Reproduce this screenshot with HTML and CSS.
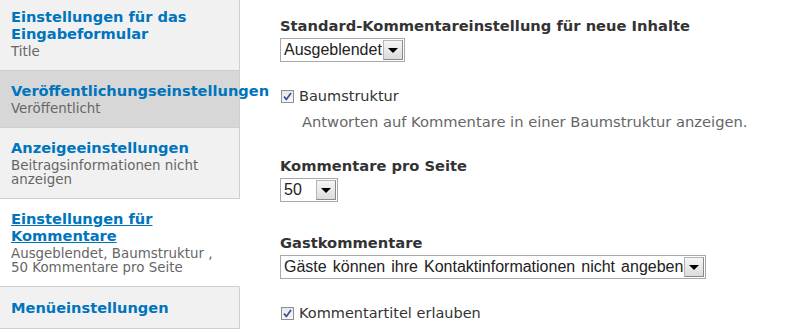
FILE: index.html
```html
<!DOCTYPE html>
<html lang="de">
<head>
    <meta charset="UTF-8">
    <title>Inhaltstyp bearbeiten</title>
    <link rel="stylesheet" href="styles.css">
</head>
<body>
    <div class="vertical-tabs">
        <ul class="tab-list">
            <li class="tab first">
                <a href="#" class="tab-title">Einstellungen für das Eingabeformular</a>
                <span class="summary">Title</span>
            </li>
            <li class="tab hover">
                <a href="#" class="tab-title">Veröffentlichungseinstellungen</a>
                <span class="summary">Veröffentlicht</span>
            </li>
            <li class="tab">
                <a href="#" class="tab-title">Anzeigeeinstellungen</a>
                <span class="summary">Beitragsinformationen nicht anzeigen</span>
            </li>
            <li class="tab selected">
                <a href="#" class="tab-title">Einstellungen für Kommentare</a>
                <span class="summary">Ausgeblendet, Baumstruktur ,<br>50 Kommentare pro Seite</span>
            </li>
            <li class="tab last">
                <a href="#" class="tab-title">Menüeinstellungen</a>
            </li>
        </ul>

        <div class="pane">
            <div class="form-item">
                <label class="field-label">Standard-Kommentareinstellung für neue Inhalte</label>
                <div class="select">
                    <span class="select-value">Ausgeblendet</span>
                    <span class="select-arrow"></span>
                </div>
            </div>

            <div class="form-item check-item tree">
                <label class="check">
                    <span class="checkbox">
                        <svg width="9" height="9" viewBox="0 0 9 9"><path d="M1 4.6 L3.4 7.4 L8 1" fill="none" stroke="#3b4f8f" stroke-width="1.7"/></svg>
                    </span>
                    Baumstruktur
                </label>
                <div class="description">Antworten auf Kommentare in einer Baumstruktur anzeigen.</div>
            </div>

            <div class="form-item">
                <label class="field-label">Kommentare pro Seite</label>
                <div class="select small">
                    <span class="select-value">50</span>
                    <span class="select-arrow"></span>
                </div>
            </div>

            <div class="form-item guest">
                <label class="field-label">Gastkommentare</label>
                <div class="select">
                    <span class="select-value wide">Gäste können ihre Kontaktinformationen nicht angeben</span>
                    <span class="select-arrow"></span>
                </div>
            </div>

            <div class="form-item check-item">
                <label class="check">
                    <span class="checkbox">
                        <svg width="9" height="9" viewBox="0 0 9 9"><path d="M1 4.6 L3.4 7.4 L8 1" fill="none" stroke="#3b4f8f" stroke-width="1.7"/></svg>
                    </span>
                    Kommentartitel erlauben
                </label>
            </div>
        </div>
    </div>
</body>
</html>
```

FILE: styles.css
```css
body {
    margin: 0;
    padding: 0;
    background-color: #fff;
    color: #333;
    font-family: "DejaVu Sans", Verdana, sans-serif;
    overflow: hidden;
}

.vertical-tabs {
    display: flex;
    align-items: flex-start;
}

.tab-list {
    list-style: none;
    margin: 0;
    padding: 0;
    width: 240px;
    flex-shrink: 0;
}

.tab {
    background-color: #f1f1f1;
    border-right: 1px solid #cfcfcf;
    border-bottom: 1px solid #cfcfcf;
    padding: 11px;
    white-space: nowrap;
}

.tab.first {
    padding-top: 8px;
}

.tab.last {
    padding: 12px 11px;
}

.tab.hover {
    background-color: #d7d7d7;
}

.tab.selected {
    background-color: #fff;
    border-right-color: #fff;
}

.tab-title {
    display: block;
    color: #0074bd;
    font-weight: bold;
    font-size: 14.6px;
    line-height: 17px;
    text-decoration: none;
    white-space: normal;
    width: 218px;
}

.tab.hover .tab-title {
    white-space: nowrap;
    width: auto;
}

.tab.selected .tab-title {
    text-decoration: underline;
    width: 180px;
}

.summary {
    display: block;
    margin-top: 3px;
    color: #666;
    font-size: 13.4px;
    line-height: 14px;
    white-space: normal;
}

.pane {
    padding: 17px 0 0 40px;
}

.form-item {
    margin-bottom: 25px;
}

.form-item.tree {
    margin-bottom: 27px;
}

.field-label {
    display: block;
    font-weight: bold;
    font-size: 14.7px;
    line-height: 18px;
    margin-bottom: 3px;
    color: #333;
}

.select {
    display: inline-flex;
    align-items: stretch;
    height: 24px;
    box-sizing: border-box;
    border: 1px solid #a9a9a9;
    background-color: #fff;
    padding: 1px;
    font-family: "Liberation Sans", Arial, sans-serif;
    font-size: 16px;
    color: #222;
}

.select-value {
    padding: 0 1px 0 2px;
    line-height: 20px;
    white-space: nowrap;
}

.select-value.wide {
    word-spacing: 1.6px;
}

.select.small .select-value {
    width: 31px;
}

.select-arrow {
    width: 18px;
    border: 1px solid #b5b5b5;
    border-right-color: #8a8a8a;
    border-bottom-color: #8a8a8a;
    background: linear-gradient(#f6f6f6, #dcdcdc);
    display: flex;
    align-items: center;
    justify-content: center;
}

.select-arrow::after {
    content: "";
    border-left: 5px solid transparent;
    border-right: 5px solid transparent;
    border-top: 5px solid #000;
}

.check {
    display: flex;
    align-items: center;
    gap: 5px;
    font-size: 14.5px;
    line-height: 18px;
    color: #333;
    padding-left: 1px;
}

.checkbox {
    width: 11px;
    height: 11px;
    border: 1px solid #8e8f8f;
    background: linear-gradient(#e6e6ec, #f8f8fb);
    display: flex;
    align-items: center;
    justify-content: center;
}

.description {
    margin: 9px 0 0 22px;
    font-size: 14.7px;
    line-height: 16px;
    color: #666;
}

.guest {
    margin-top: 32px;
}
```
